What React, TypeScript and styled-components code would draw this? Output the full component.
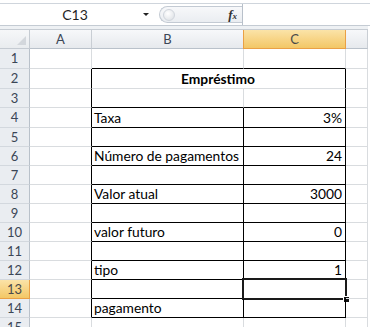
import React from "react";
import styled, { createGlobalStyle, css } from "styled-components";

const GlobalStyle = createGlobalStyle`
  body {
    margin: 0;
    background: #ffffff;
  }
`;

const GRID = "#d9dcdf";
const INK = "#000000";

type RowDef = {
  n: number;
  h: number;
  b?: string;
  c?: string;
};

const rows: RowDef[] = [
  { n: 1, h: 20 },
  { n: 2, h: 20, b: "Empréstimo" },
  { n: 3, h: 19 },
  { n: 4, h: 20, b: "Taxa", c: "3%" },
  { n: 5, h: 19 },
  { n: 6, h: 19, b: "Número de pagamentos", c: "24" },
  { n: 7, h: 19 },
  { n: 8, h: 19, b: "Valor atual", c: "3000" },
  { n: 9, h: 19 },
  { n: 10, h: 19, b: "valor futuro", c: "0" },
  { n: 11, h: 19 },
  { n: 12, h: 19, b: "tipo", c: "1" },
  { n: 13, h: 19 },
  { n: 14, h: 19, b: "pagamento" },
  { n: 15, h: 19 },
];

const SELECTED_ROW = 13;

function App() {
  const template = ["19px", ...rows.map((r) => `${r.h}px`)].join(" ");

  return (
    <>
      <GlobalStyle />
      <Window>
        <FormulaBar>
          <NameBox>
            <NameLabel>C13</NameLabel>
            <Caret />
          </NameBox>
          <Buttons>
            <Knob />
            <Fx>
              <i>f</i>
              <small>x</small>
            </Fx>
          </Buttons>
          <Input />
        </FormulaBar>
        <Gap />
        <Sheet $rows={template}>
          <Corner>
            <CornerMark />
          </Corner>
          <ColHead>A</ColHead>
          <ColHead>B</ColHead>
          <ColHead $active>C</ColHead>
          <ColHead />

          {rows.map((r) => {
            const inTable = r.n >= 2 && r.n <= 14;
            const body = r.n >= 4 && r.n <= 14;
            const boxed = r.n === 1 || (r.n >= 3 && r.n <= 14);
            return (
              <React.Fragment key={r.n}>
                <RowHead $active={r.n === SELECTED_ROW}>{r.n}</RowHead>
                <Cell $rb={inTable} />
                {r.n === 2 ? (
                  <Cell $span={2} $rb $align="center" $bold>
                    {r.b}
                  </Cell>
                ) : (
                  <>
                    <Cell $rb={body} $bb={boxed}>
                      {r.b}
                    </Cell>
                    <Cell
                      $rb={r.n >= 3 && r.n <= 14}
                      $bb={boxed}
                      $align="right"
                      $sel={r.n === SELECTED_ROW}
                    >
                      {r.c}
                    </Cell>
                  </>
                )}
                <Cell />
              </React.Fragment>
            );
          })}
        </Sheet>
      </Window>
    </>
  );
}

const Window = styled.div`
  width: 381px;
  height: 327px;
  overflow: hidden;
  background: #ffffff;
  font-family: Lato, "Liberation Sans", sans-serif;
`;

const FormulaBar = styled.div`
  display: flex;
  align-items: stretch;
  width: 370px;
  height: 21px;
  margin-top: 3px;
  border-top: 1px solid #cfd5dc;
  border-bottom: 1px solid #c4cbd3;
  background: #ffffff;
`;

const NameBox = styled.div`
  display: flex;
  align-items: center;
  width: 155px;
  padding-left: 10px;
  box-sizing: border-box;
`;

const NameLabel = styled.span`
  width: 130px;
  text-align: center;
  font-size: 14px;
  color: #1f1f1f;
`;

const Caret = styled.span`
  width: 0;
  height: 0;
  margin-left: 3px;
  border-left: 3px solid transparent;
  border-right: 3px solid transparent;
  border-top: 3px solid #222222;
`;

const Buttons = styled.div`
  display: flex;
  align-items: center;
  justify-content: space-between;
  align-self: center;
  width: 83px;
  height: 17px;
  margin-left: 4px;
  padding: 0 5px 0 3px;
  box-sizing: border-box;
  border: 1px solid #c3cad3;
  border-right: none;
  border-radius: 10px 0 0 10px;
  background: linear-gradient(#f7f8fa, #eaedf1);
`;

const Knob = styled.span`
  width: 10px;
  height: 10px;
  border-radius: 50%;
  border: 1px solid #d0d5dc;
  background: radial-gradient(circle at 40% 35%, #ffffff, #d9dde2);
`;

const Fx = styled.span`
  font-family: "Liberation Serif", serif;
  font-weight: bold;
  font-size: 13px;
  color: #333333;
  i {
    font-style: italic;
  }
  small {
    font-size: 9px;
    font-style: italic;
  }
`;

const Input = styled.div`
  flex: 1;
  border-left: 1px solid #b8c0ca;
  background: #ffffff;
`;

const Gap = styled.div`
  width: 368px;
  height: 3px;
  background: #eef1f4;
`;

const Sheet = styled.div<{ $rows: string }>`
  display: grid;
  grid-template-columns: 30px 62px 152px 102px 22px;
  grid-template-rows: ${(p) => p.$rows};
  width: 368px;
  border-top: 1px solid #c6ccd3;
`;

const headBase = css`
  display: flex;
  align-items: center;
  justify-content: center;
  box-sizing: border-box;
  font-size: 13px;
  color: #3b4656;
`;

const Corner = styled.div`
  ${headBase};
  position: relative;
  background: linear-gradient(#f6f7f9, #e9ecef);
  border-right: 1px solid #c5cbd2;
  border-bottom: 1px solid #c5cbd2;
`;

const CornerMark = styled.span`
  position: absolute;
  right: 3px;
  bottom: 3px;
  width: 0;
  height: 0;
  border-left: 9px solid transparent;
  border-bottom: 9px solid #d3d7dc;
`;

const activeHead = css`
  background: linear-gradient(#fbe3a8, #f3c766);
  border-color: #eaa045;
  color: #4a4a4a;
`;

const ColHead = styled.div<{ $active?: boolean }>`
  ${headBase};
  background: linear-gradient(#f7f8fa, #e6e9ed);
  border-right: 1px solid #c9ced4;
  border-bottom: 1px solid #b9c1ca;
  ${(p) =>
    p.$active &&
    css`
      ${activeHead};
      border-left: 1px solid #eaa045;
      margin-left: -1px;
    `}
`;

const RowHead = styled.div<{ $active?: boolean }>`
  ${headBase};
  align-items: flex-start;
  padding-top: 1px;
  background: #eaedf1;
  border-right: 1px solid #b9c1ca;
  border-bottom: 1px solid #d3d8de;
  ${(p) => p.$active && activeHead}
`;

const Cell = styled.div<{
  $rb?: boolean;
  $bb?: boolean;
  $span?: number;
  $align?: "left" | "right" | "center";
  $bold?: boolean;
  $sel?: boolean;
}>`
  position: relative;
  display: flex;
  align-items: flex-end;
  justify-content: ${(p) =>
    p.$align === "right" ? "flex-end" : p.$align === "center" ? "center" : "flex-start"};
  grid-column: span ${(p) => p.$span ?? 1};
  box-sizing: border-box;
  padding: 0 3px 1px 2px;
  border-right: 1px solid ${(p) => (p.$rb ? INK : GRID)};
  border-bottom: 1px solid ${(p) => (p.$bb ? INK : GRID)};
  font-size: 13.8px;
  line-height: 17px;
  font-weight: ${(p) => (p.$bold ? 700 : 400)};
  color: #000000;
  white-space: nowrap;
  ${(p) =>
    p.$sel &&
    css`
      &::before {
        content: "";
        position: absolute;
        left: -2px;
        top: -2px;
        right: -2px;
        bottom: -2px;
        border: 2px solid #1a1a1a;
        box-shadow: inset 0 0 0 1px #ffffff;
      }
      &::after {
        content: "";
        position: absolute;
        right: -4px;
        bottom: -4px;
        width: 5px;
        height: 5px;
        background: #111111;
        border: 1px solid #ffffff;
        border-right: none;
        border-bottom: none;
      }
    `}
`;

export default App;
